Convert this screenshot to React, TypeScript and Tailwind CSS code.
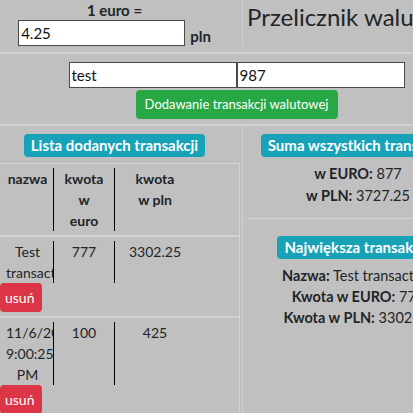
import React from "react";

interface Transakcja {
    nazwa: string;
    euro: string;
    pln: string;
}

const transakcje: Transakcja[] = [
    { nazwa: "Test transaction", euro: "777", pln: "3302.25" },
    { nazwa: "11/6/2021, 9:00:25 PM", euro: "100", pln: "425" },
];

function Badge({ children }: { children: React.ReactNode }) {
    return (
        <span className="inline-block h-[23px] px-[7px] rounded-[4px] bg-[#17a2b8] text-white font-bold text-[15px] leading-[23px] whitespace-nowrap">
            {children}
        </span>
    );
}

function Row({ nazwa, euro, pln }: Transakcja) {
    return (
        <div className="border-b-2 border-[#d2d2d2] pt-[4px] pb-[4px]">
            <div className="grid grid-cols-[54px_61px_80px_1fr] leading-[21px]">
                <div className="border-r border-black pl-[6px] pr-[4px] text-center overflow-hidden">{nazwa}</div>
                <div className="border-r border-black text-center">{euro}</div>
                <div className="text-center">{pln}</div>
                <div />
            </div>
            <button className="block w-[42px] h-[29px] pl-[5px] text-left rounded-[4px] bg-[#dc3545] text-white text-[14px]">
                usuń
            </button>
        </div>
    );
}

export default function App() {
    return (
        <div className="w-[413px] h-[413px] overflow-hidden bg-[#c0c0c0] text-[#212529] text-[14px] font-['Lato',sans-serif]">
            <div className="w-[473px]">
                <div className="flex h-[54px] border-b-2 border-[#d2d2d2]">
                    <div className="w-[243px] h-[47px] pr-[13px] pt-[1px] border-r border-[#d0d0d0] flex flex-col items-center">
                        <div className="font-bold text-[15px] leading-[18px]">1 euro =</div>
                        <div className="flex items-end gap-[5px] mt-[1px]">
                            <input
                                defaultValue="4.25"
                                className="w-[167px] h-[26px] px-[2px] bg-white border border-[#4a4a4a] text-[15px] text-[#111]"
                            />
                            <span className="font-bold text-[15px] leading-[20px]">pln</span>
                        </div>
                    </div>
                    <h1 className="pl-[4px] pt-[1px] text-[24px] leading-[32px] whitespace-nowrap">Przelicznik walut</h1>
                </div>

                <div className="h-[72px] border-b-2 border-[#d2d2d2] pt-[8px] flex flex-col items-center">
                    <div className="flex">
                        <input
                            defaultValue="test"
                            className="w-[168px] h-[26px] px-[2px] bg-white border border-[#4a4a4a] text-[15px] text-[#111]"
                        />
                        <input
                            defaultValue="987"
                            className="w-[168px] h-[26px] px-[2px] bg-white border border-[#4a4a4a] text-[15px] text-[#111]"
                        />
                    </div>
                    <button className="mt-[2px] w-[202px] h-[29px] rounded-[4px] bg-[#28a745] text-white text-[13px]">
                        Dodawanie transakcji walutowej
                    </button>
                </div>

                <div className="flex">
                    <div className="w-[243px] border-r border-[#d0d0d0]">
                        <div className="pt-[8px] pr-[13px] flex justify-center">
                            <Badge>Lista dodanych transakcji</Badge>
                        </div>
                        <div className="w-[240px] mt-[6px] border-t border-r border-[#d2d2d2]">
                            <div className="border-b-2 border-[#d2d2d2] pt-[4px] pb-[4px]">
                                <div className="grid grid-cols-[54px_61px_80px_1fr] leading-[21px] font-bold">
                                    <div className="border-r border-black pl-[6px] pr-[4px] text-center">nazwa</div>
                                    <div className="border-r border-black text-center">
                                        kwota
                                        <br />w<br />
                                        euro
                                    </div>
                                    <div className="text-center">
                                        kwota
                                        <br />w pln
                                    </div>
                                    <div />
                                </div>
                            </div>
                            {transakcje.map((t) => (
                                <Row key={t.nazwa} {...t} />
                            ))}
                        </div>
                    </div>

                    <div className="flex-1 flex flex-col items-center pt-[8px] text-[14.5px]">
                        <Badge>Suma wszystkich transakcji</Badge>
                        <div className="mt-[6px] leading-[22px] text-center">
                            <p>
                                <b>w EURO:</b> 877
                            </p>
                            <p>
                                <b>w PLN:</b> 3727.25
                            </p>
                        </div>
                        <hr className="w-[226px] ml-[4px] mt-[11px] border-t border-[#d4d4d4]" />
                        <div className="mt-[17px]">
                            <Badge>Największa transakcja</Badge>
                        </div>
                        <div className="mt-[6px] leading-[21px] text-center whitespace-nowrap">
                            <p>
                                <b>Nazwa:</b> Test transaction
                            </p>
                            <p>
                                <b>Kwota w EURO:</b> 777
                            </p>
                            <p>
                                <b>Kwota w PLN:</b> 3302.25
                            </p>
                        </div>
                    </div>
                </div>
            </div>
        </div>
    );
}
